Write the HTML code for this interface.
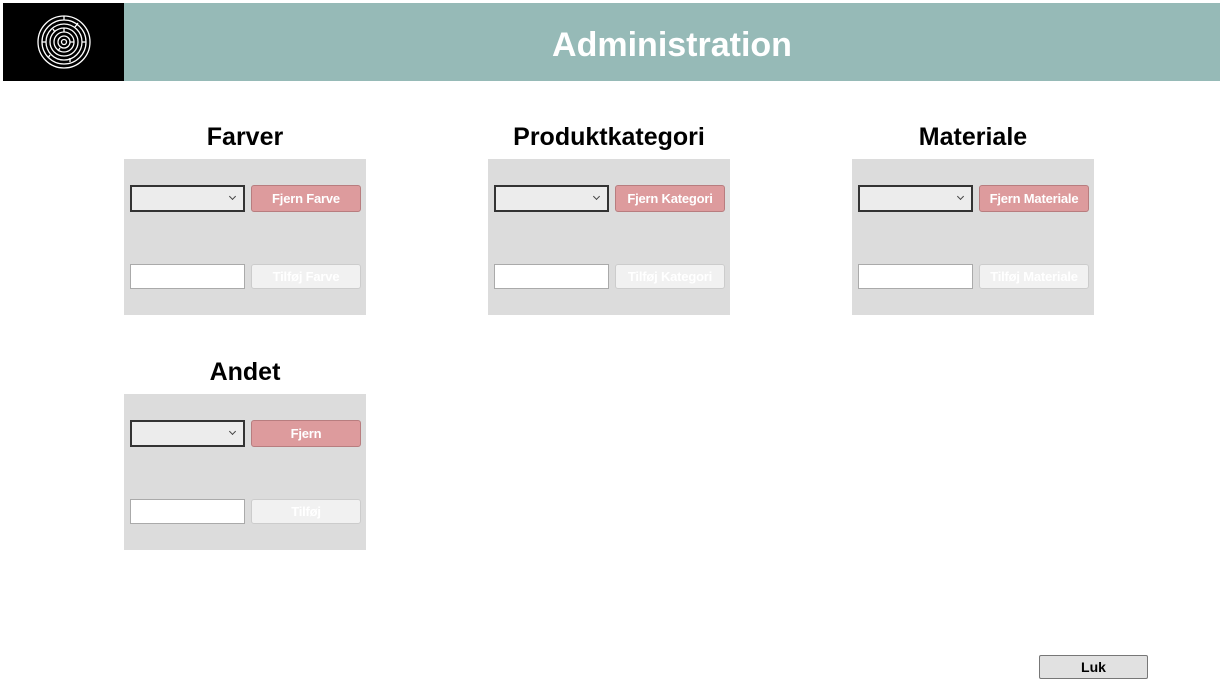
<!DOCTYPE html>
<html><head><meta charset="utf-8"><style>
body{margin:0;width:1220px;height:699px;background:#fff;position:relative;font-family:"Liberation Sans",sans-serif;overflow:hidden}
.a{position:absolute;box-sizing:border-box}
.logo{left:3px;top:3px;width:121px;height:78px;background:#000}
.hdr{left:124px;top:3px;width:1096px;height:78px;background:#96bab7;color:#fff;font-weight:bold;font-size:34px;text-align:center;line-height:84px;padding-left:0}
.t{font-size:25px;font-weight:bold;text-align:center;width:300px;color:#000}
.p{width:242px;height:156px;background:#dcdcdc}
.cb{width:115px;height:27px;border:2px solid #333;background:#ececec}
.cb:after{content:"";position:absolute;right:8px;top:7px;width:4px;height:4px;border-right:1px solid #444;border-bottom:1px solid #444;transform:rotate(45deg)}
.b1{width:110px;height:27px;background:#dd9b9d;border:1px solid #b87d7f;border-radius:3px;color:#fff;font-size:13px;font-weight:bold;text-align:center;line-height:25px;white-space:nowrap;letter-spacing:-0.2px}
.in{width:115px;height:25px;background:#fff;border:1px solid #aaa}
.b2{width:110px;height:25px;background:#f1f1f1;border:1px solid #ccc;border-radius:3px;color:#fff;font-size:13px;font-weight:bold;text-align:center;line-height:23px;white-space:nowrap;letter-spacing:-0.2px}
</style></head><body>
<div class="a logo"><svg width="121" height="78" viewBox="0 0 121 78"><g fill="none" stroke="#fff" stroke-width="1.3"><circle cx="61" cy="39" r="26"/><circle cx="61" cy="39" r="22"/><circle cx="61" cy="39" r="18"/><circle cx="61" cy="39" r="14"/><circle cx="61" cy="39" r="10"/><circle cx="61" cy="39" r="6"/><circle cx="61" cy="39" r="2.5"/><path d="M61 13v4M75 20l-3 4M83 39h-4M67 59v-4M45 55l2-3M39 39h4M50 26l2 3M61 25v4M71 39h-4M55 48l2-3"/></g></svg></div>
<div class="a hdr">Administration</div>

<div class="a t" style="left:95px;top:123px">Farver</div>
<div class="a p" style="left:124px;top:159px"></div>
<div class="a cb" style="left:130px;top:185px"></div>
<div class="a b1" style="left:251px;top:185px">Fjern Farve</div>
<div class="a in" style="left:130px;top:264px"></div>
<div class="a b2" style="left:251px;top:264px">Tilføj Farve</div>

<div class="a t" style="left:459px;top:123px">Produktkategori</div>
<div class="a p" style="left:488px;top:159px"></div>
<div class="a cb" style="left:494px;top:185px"></div>
<div class="a b1" style="left:615px;top:185px">Fjern Kategori</div>
<div class="a in" style="left:494px;top:264px"></div>
<div class="a b2" style="left:615px;top:264px">Tilføj Kategori</div>

<div class="a t" style="left:823px;top:123px">Materiale</div>
<div class="a p" style="left:852px;top:159px"></div>
<div class="a cb" style="left:858px;top:185px"></div>
<div class="a b1" style="left:979px;top:185px">Fjern Materiale</div>
<div class="a in" style="left:858px;top:264px"></div>
<div class="a b2" style="left:979px;top:264px">Tilføj Materiale</div>

<div class="a t" style="left:95px;top:358px">Andet</div>
<div class="a p" style="left:124px;top:394px"></div>
<div class="a cb" style="left:130px;top:420px"></div>
<div class="a b1" style="left:251px;top:420px">Fjern</div>
<div class="a in" style="left:130px;top:499px"></div>
<div class="a b2" style="left:251px;top:499px">Tilføj</div>

<div class="a" style="left:1039px;top:655px;width:109px;height:24px;background:#e1e1e1;border:1px solid #777;border-radius:2px;font-size:14px;font-weight:bold;text-align:center;line-height:22px">Luk</div>
</body></html>
